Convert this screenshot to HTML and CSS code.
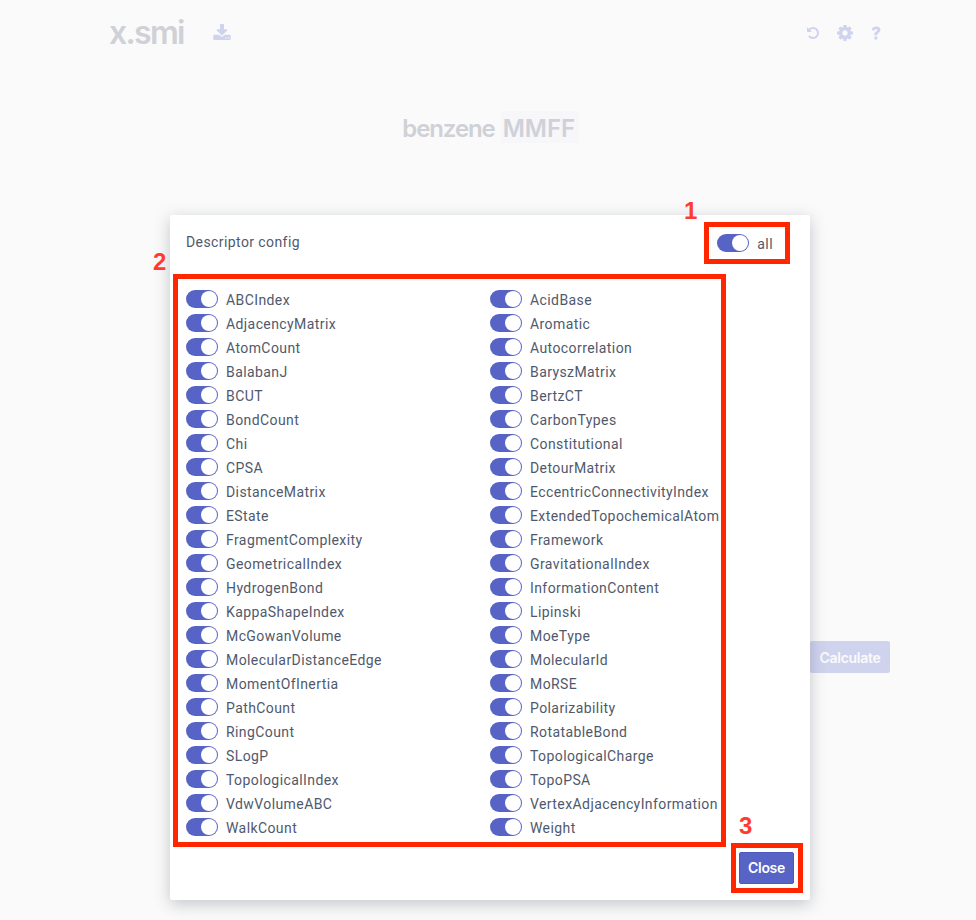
FILE: index.html
```html
<!DOCTYPE html>
<html lang="en">
<head>
<meta charset="utf-8">
<title>x.smi</title>
<link rel="stylesheet" href="styles.css">
</head>
<body>
<div class="page">
  <header class="navbar">
    <div class="brand">
      <h1 class="file">x.smi</h1>
      <svg class="download" viewBox="0 0 1664 1536" width="18" height="16"><path fill-rule="evenodd" d="M1280 1344q0-26-19-45t-45-19-45 19-19 45 19 45 45 19 45-19 19-45zm256 0q0-26-19-45t-45-19-45 19-19 45 19 45 45 19 45-19 19-45zm128-224v320q0 40-28 68t-68 28H96q-40 0-68-28t-28-68v-320q0-40 28-68t68-28h465l135 136q58 56 136 56t136-56l136-136h464q40 0 68 28t28 68zm-325-569q17 41-14 70L877 1069q-18 19-45 19t-45-19L339 621q-31-29-14-70 17-39 59-39h256V64q0-26 19-45t45-19h256q26 0 45 19t19 45v448h256q42 0 59 39z"/></svg>
    </div>
    <div class="actions">
      <svg viewBox="0 0 1536 1536" width="12" height="12"><path d="M1536 768q0 156-61 298t-164 245-245 164-298 61q-172 0-327-72.500t-264-204.500q-7-10-6.500-22.500t8.500-20.500l137-138q10-9 25-9 16 2 23 12 73 95 179 147t225 52q104 0 198.500-40.500t163.500-109.500 109.500-163.500 40.500-198.500-40.500-198.500-109.500-163.500-163.500-109.500-198.500-40.500q-98 0-188 35.500t-160 101.500l137 138q31 30 14 69-17 40-59 40H64q-26 0-45-19T0 576V128q0-42 40-59 39-17 69 14l130 129q107-101 244.500-156.500T768 0q156 0 298 61t245 164 164 245 61 298z"/></svg>
      <svg viewBox="0 0 1536 1536" width="16" height="16"><path fill-rule="evenodd" d="M1024 768q0-106-75-181t-181-75-181 75-75 181 75 181 181 75 181-75 75-181zm512-109v222q0 12-8 23t-20 13l-185 28q-19 54-39 91 35 50 107 138 10 12 10 25t-9 23q-27 37-99 108t-94 71q-12 0-26-9l-138-108q-44 23-91 38-16 136-29 186-7 28-36 28H657q-14 0-24.500-8.500T621 1506l-28-184q-49-16-90-37l-141 107q-10 9-25 9-14 0-25-11-126-114-165-168-7-10-7-23 0-12 8-23 15-21 51-66.500t54-70.500q-27-50-41-99L29 913q-13-2-21-12.500T0 877V655q0-12 8-23t19-13l186-28q14-46 39-92-40-57-107-138-10-12-10-24 0-10 9-23 26-36 98.500-107.500T337 135q13 0 26 10l138 107q44-23 91-38 16-136 29-186Q628 0 657 0h222q14 0 24.500 8.500T915 30l28 184q49 16 90 37l142-107q9-9 24-9 13 0 25 10 129 119 165 170 7 8 7 22 0 12-8 23-15 21-51 66.500t-54 70.500q26 50 41 98l183 28q13 2 21 12.500t8 23.500z"/></svg>
      <svg viewBox="0 0 10 14" width="10" height="14"><path d="M3.300 10.500h3v3h-3zM.500 3.400Q2 .500 5.200.500q4.300 0 4.300 3.600 0 1.700-2 2.900-1.200.700-1.200 1.500v.800h-3v-1Q3.300 6.500 5 5.500q1.300-.700 1.300-1.300Q6.300 3 5 3q-1.200 0-2.300 1.900z"/></svg>
    </div>
  </header>
  <h2 class="molecule">benzene<span class="tag">MMFF</span></h2>
  <div class="calc-row"><button class="btn">Calculate</button></div>
</div>

<section class="modal">
  <header class="modal-head">
    <span>Descriptor config</span>
    <label class="switch all"><i class="track"></i>all</label>
  </header>
  <div class="grid">
    <label class="switch"><i class="track"></i>ABCIndex</label><label class="switch"><i class="track"></i>AcidBase</label>
    <label class="switch"><i class="track"></i>AdjacencyMatrix</label><label class="switch"><i class="track"></i>Aromatic</label>
    <label class="switch"><i class="track"></i>AtomCount</label><label class="switch"><i class="track"></i>Autocorrelation</label>
    <label class="switch"><i class="track"></i>BalabanJ</label><label class="switch"><i class="track"></i>BaryszMatrix</label>
    <label class="switch"><i class="track"></i>BCUT</label><label class="switch"><i class="track"></i>BertzCT</label>
    <label class="switch"><i class="track"></i>BondCount</label><label class="switch"><i class="track"></i>CarbonTypes</label>
    <label class="switch"><i class="track"></i>Chi</label><label class="switch"><i class="track"></i>Constitutional</label>
    <label class="switch"><i class="track"></i>CPSA</label><label class="switch"><i class="track"></i>DetourMatrix</label>
    <label class="switch"><i class="track"></i>DistanceMatrix</label><label class="switch"><i class="track"></i>EccentricConnectivityIndex</label>
    <label class="switch"><i class="track"></i>EState</label><label class="switch"><i class="track"></i>ExtendedTopochemicalAtom</label>
    <label class="switch"><i class="track"></i>FragmentComplexity</label><label class="switch"><i class="track"></i>Framework</label>
    <label class="switch"><i class="track"></i>GeometricalIndex</label><label class="switch"><i class="track"></i>GravitationalIndex</label>
    <label class="switch"><i class="track"></i>HydrogenBond</label><label class="switch"><i class="track"></i>InformationContent</label>
    <label class="switch"><i class="track"></i>KappaShapeIndex</label><label class="switch"><i class="track"></i>Lipinski</label>
    <label class="switch"><i class="track"></i>McGowanVolume</label><label class="switch"><i class="track"></i>MoeType</label>
    <label class="switch"><i class="track"></i>MolecularDistanceEdge</label><label class="switch"><i class="track"></i>MolecularId</label>
    <label class="switch"><i class="track"></i>MomentOfInertia</label><label class="switch"><i class="track"></i>MoRSE</label>
    <label class="switch"><i class="track"></i>PathCount</label><label class="switch"><i class="track"></i>Polarizability</label>
    <label class="switch"><i class="track"></i>RingCount</label><label class="switch"><i class="track"></i>RotatableBond</label>
    <label class="switch"><i class="track"></i>SLogP</label><label class="switch"><i class="track"></i>TopologicalCharge</label>
    <label class="switch"><i class="track"></i>TopologicalIndex</label><label class="switch"><i class="track"></i>TopoPSA</label>
    <label class="switch"><i class="track"></i>VdwVolumeABC</label><label class="switch"><i class="track"></i>VertexAdjacencyInformation</label>
    <label class="switch"><i class="track"></i>WalkCount</label><label class="switch"><i class="track"></i>Weight</label>
  </div>
  <footer class="modal-foot"><button class="btn close">Close</button></footer>
</section>

<div class="mark mark-1"><b>1</b></div>
<div class="mark mark-2"><b>2</b></div>
<div class="mark mark-3"><b>3</b></div>
</body>
</html>
```
FILE: styles.css
```css
* { box-sizing: border-box; }
body {
  margin: 0;
  position: relative;
  width: 976px;
  height: 920px;
  overflow: hidden;
  background: #fafafa;
  color: #50596c;
  font: 14px/20px Roboto, "Liberation Sans", sans-serif;
  letter-spacing: 0.41px;
}
.page { padding: 0 86px 0 109px; }
.navbar { display: flex; justify-content: space-between; align-items: center; height: 66px; }
.brand { display: flex; align-items: center; }
.file { width: 104px; margin: 0; font: 600 32px/40px Inter, sans-serif; letter-spacing: -1.7px; color: #cfd1d6; }
.navbar svg { fill: #d0d3ee; }
.navbar .download { margin-top: -2px; }
.actions { display: flex; align-items: center; gap: 18px; padding-right: 9px; }
.molecule { display: flex; justify-content: center; gap: 6px; margin: 45px 0 0; padding-right: 18px; font: 600 24px/35px Inter, sans-serif; letter-spacing: -1.1px; color: #cfd1d6; }
.tag { width: 78px; height: 32px; padding: 0 2px; background: #f7f7fa; color: #cfd1d9; letter-spacing: 0; }
.calc-row { display: flex; justify-content: flex-end; margin-top: 495px; }
.btn {
  height: 32px;
  width: 80px;
  padding: 1px 0 0;
  border: 0;
  border-radius: 2px;
  background: #d0d3ee;
  color: #fafafa;
  font: 600 14px/20px Inter, sans-serif;
  letter-spacing: -0.3px;
}
.modal {
  position: absolute;
  left: 170px;
  top: 215px;
  width: 640px;
  height: 685px;
  padding: 16px;
  display: flex;
  flex-direction: column;
  background: #fff;
  border-radius: 2px;
  box-shadow: 0 4px 16px rgba(69, 77, 93, 0.3);
}
.modal-head { display: flex; justify-content: space-between; height: 58px; padding: 1px 21px 0 0; }
.switch { display: flex; align-items: center; gap: 8px; height: 24px; padding-top: 1px; white-space: nowrap; }
.all { margin-top: -1px; }
.track {
  width: 32px;
  height: 18px;
  margin-top: -2px;
  padding: 1px;
  border-radius: 9px;
  background: #5764c6;
  display: flex;
  justify-content: flex-end;
}
.track::before { content: ""; width: 16px; height: 16px; border-radius: 50%; background: #fff; }
.grid { display: grid; grid-template-columns: 304px 304px; grid-auto-rows: 24px; margin-top: -2px; }
.modal-foot { display: flex; justify-content: flex-end; margin-top: auto; }
.close { width: 55px; background: #5764c6; color: #fff; border: 1px solid #4b58bd; padding: 0; }
.mark { position: absolute; border: 5px solid #ff2600; }
.mark b { position: absolute; font: bold 24px/24px "Liberation Sans", sans-serif; letter-spacing: 0; color: #ff3b30; }
.mark-1 { left: 704px; top: 222px; width: 86px; height: 42px; }
.mark-1 b { left: -25px; top: -28px; }
.mark-2 { left: 173px; top: 274px; width: 553px; height: 573px; }
.mark-2 b { left: -25px; top: -29px; }
.mark-3 { left: 731px; top: 843px; width: 72px; height: 50px; }
.mark-3 b { left: 3px; top: -34px; }
```
